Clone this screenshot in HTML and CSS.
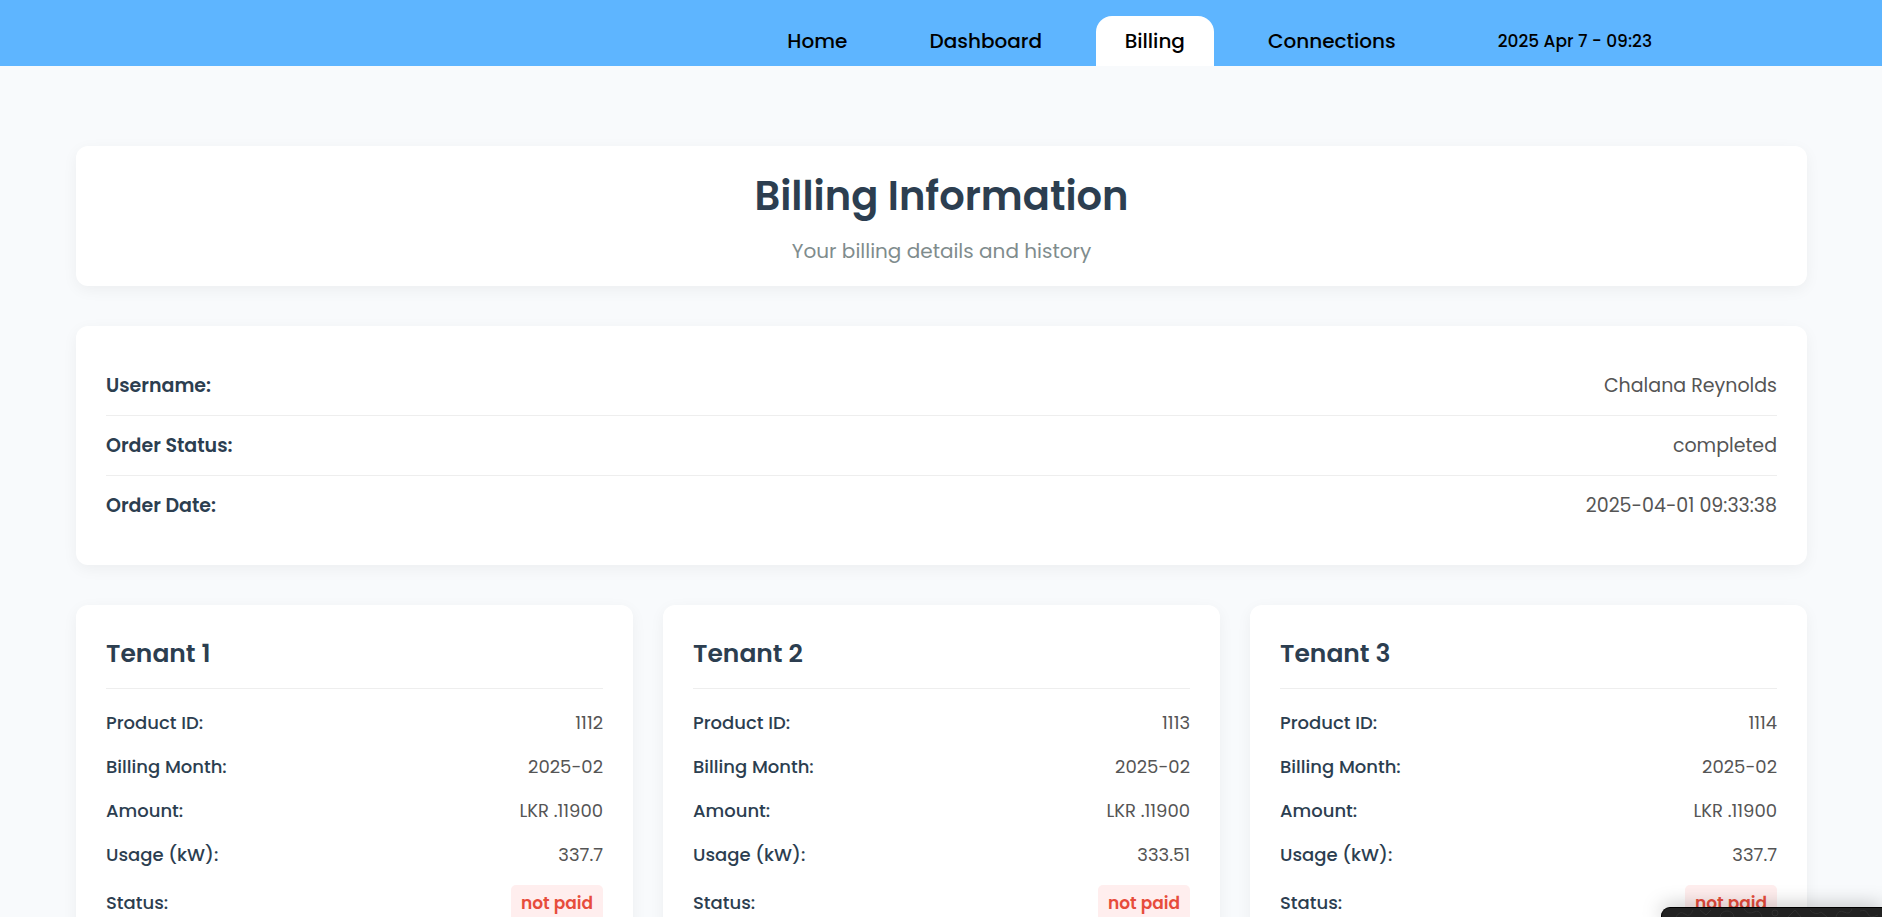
FILE: index.html
```html
<!DOCTYPE html>
<html lang="en">
<head>
<meta charset="utf-8">
<title>Billing Information</title>
<link rel="stylesheet" href="styles.css">
</head>
<body>
<header class="topbar">
  <nav class="tabs">
    <a class="tab tab-home" href="#">Home</a>
    <a class="tab tab-dashboard" href="#">Dashboard</a>
    <a class="tab tab-billing active" href="#" aria-current="page">Billing</a>
    <a class="tab tab-connections" href="#">Connections</a>
  </nav>
  <time class="clock" datetime="2025-04-07T09:23">2025 Apr 7 - 09:23</time>
</header>
<main class="page">
  <section class="card intro">
    <h1>Billing Information</h1>
    <p>Your billing details and history</p>
  </section>
  <dl class="card order">
    <div class="order-row"><dt>Username:</dt><dd>Chalana Reynolds</dd></div>
    <div class="order-row"><dt>Order Status:</dt><dd>completed</dd></div>
    <div class="order-row"><dt>Order Date:</dt><dd>2025-04-01 09:33:38</dd></div>
  </dl>
  <div class="tenants">
    <section class="card">
      <h2>Tenant 1</h2>
      <dl class="details">
        <div class="row"><dt>Product ID:</dt><dd>1112</dd></div>
        <div class="row"><dt>Billing Month:</dt><dd>2025-02</dd></div>
        <div class="row"><dt>Amount:</dt><dd>LKR .11900</dd></div>
        <div class="row"><dt>Usage (kW):</dt><dd>337.7</dd></div>
        <div class="row"><dt>Status:</dt><dd class="status">not paid</dd></div>
      </dl>
    </section>
    <section class="card">
      <h2>Tenant 2</h2>
      <dl class="details">
        <div class="row"><dt>Product ID:</dt><dd>1113</dd></div>
        <div class="row"><dt>Billing Month:</dt><dd>2025-02</dd></div>
        <div class="row"><dt>Amount:</dt><dd>LKR .11900</dd></div>
        <div class="row"><dt>Usage (kW):</dt><dd>333.51</dd></div>
        <div class="row"><dt>Status:</dt><dd class="status">not paid</dd></div>
      </dl>
    </section>
    <section class="card">
      <h2>Tenant 3</h2>
      <dl class="details">
        <div class="row"><dt>Product ID:</dt><dd>1114</dd></div>
        <div class="row"><dt>Billing Month:</dt><dd>2025-02</dd></div>
        <div class="row"><dt>Amount:</dt><dd>LKR .11900</dd></div>
        <div class="row"><dt>Usage (kW):</dt><dd>337.7</dd></div>
        <div class="row"><dt>Status:</dt><dd class="status">not paid</dd></div>
      </dl>
    </section>
  </div>
</main>
<div class="panel">
  <svg width="220" height="9" viewBox="0 0 220 9" fill="none" stroke="#303030" aria-hidden="true">
    <path d="M14 9q4-7 9-3t8-4M38 2l6 5 5-5M58 9q1-6 7-6t7 6M82 1q4 6 10 3t8 5M110 5a3 3 0 1 0 6 0a3 3 0 1 0-6 0M126 9l7-7 6 7M148 2q5 6 11 2l6 5M174 9q2-8 8-5t8-3M198 3q6-2 8 3t10 1"/>
  </svg>
</div>
</body>
</html>
```
FILE: styles.css
```css
* { box-sizing: border-box; margin: 0; padding: 0; }
body {
  height: 100vh;
  overflow: hidden;
  background: #f8fafc;
  color: #2c3e50;
  font-family: Poppins, Inter, "Open Sans", sans-serif;
}
.topbar {
  display: flex;
  justify-content: flex-end;
  align-items: flex-end;
  gap: 74px;
  height: 66px;
  padding-right: 230px;
  background: #5eb5ff;
  color: #000;
  font-weight: 500;
}
.tabs { display: flex; gap: 26px; }
.tab {
  height: 50px;
  border-radius: 16px 16px 0 0;
  color: #000;
  font-size: 20px;
  line-height: 50px;
  text-align: center;
  text-decoration: none;
}
.tab-home { width: 117px; }
.tab-dashboard { width: 168px; }
.tab-billing { width: 118px; }
.tab-connections { width: 184px; }
.tab.active { background: #fff; }
.clock { font-size: 17px; line-height: 50px; }
.page {
  display: flex;
  flex-direction: column;
  gap: 40px;
  padding: 80px 75px 40px 76px;
}
.card {
  padding: 30px;
  border-radius: 12px;
  background: #fff;
  box-shadow: 0 4px 15px rgba(0, 0, 0, 0.05);
}
.intro { padding: 20px; text-align: center; }
.intro h1 { font-size: 40px; font-weight: 600; line-height: 60px; }
.intro p { margin-top: 10px; color: #7f8c8d; font-size: 20px; line-height: 30px; }
.order-row {
  display: flex;
  justify-content: space-between;
  border-bottom: 1px solid #eee;
  font-size: 19px;
  line-height: 59px;
}
.order-row:last-child { border-bottom: 0; }
.order-row dt { font-weight: 600; }
dd { color: #555; }
.tenants { display: grid; grid-template-columns: repeat(3, 1fr); gap: 30px; }
h2 {
  padding-bottom: 15px;
  border-bottom: 1px solid #eee;
  font-size: 25px;
  font-weight: 600;
  line-height: 38px;
}
.details { padding-top: 12px; }
.row {
  display: flex;
  justify-content: space-between;
  align-items: center;
  padding: 8px 0;
  font-size: 18px;
  line-height: 28px;
}
.row dt { font-weight: 500; }
.row .status {
  padding: 4px 10px;
  border-radius: 5px;
  background: #ffeeee;
  color: #e74c3c;
  font-size: 17px;
  font-weight: 600;
}
.panel {
  position: fixed;
  right: 0;
  bottom: 0;
  width: 221px;
  height: 10px;
  overflow: hidden;
  border-top: 1px solid #000;
  border-left: 1px solid #000;
  border-radius: 9px 0 0 0;
  background: #222;
  box-shadow: 0 0 20px rgba(0, 0, 0, 0.35);
}
.panel svg { display: block; }
```
